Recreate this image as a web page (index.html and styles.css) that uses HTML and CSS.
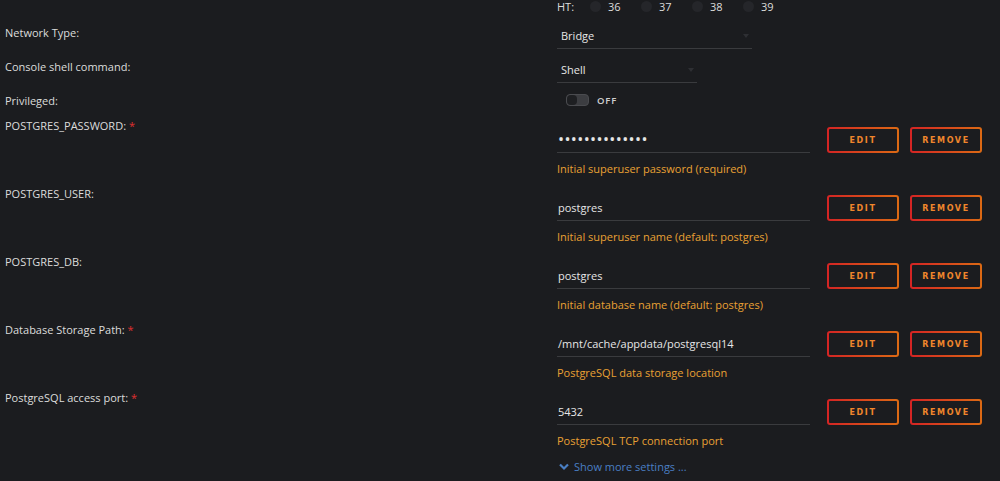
FILE: index.html
```html
<!DOCTYPE html>
<html lang="en">

<head>
    <meta charset="UTF-8">
    <title>Update Container</title>
    <link rel="stylesheet" href="styles.css">
</head>

<body>
    <div class="settings">
        <div class="row row-ht">
            <div class="label"></div>
            <div class="field">
                <span class="ht-title">HT:</span>
                <span class="cpu"><i class="dot"></i>36</span>
                <span class="cpu"><i class="dot"></i>37</span>
                <span class="cpu"><i class="dot"></i>38</span>
                <span class="cpu"><i class="dot"></i>39</span>
            </div>
        </div>

        <div class="row row-select">
            <div class="label">Network Type:</div>
            <div class="field">
                <div class="select select-wide">Bridge<i class="caret"></i></div>
            </div>
        </div>

        <div class="row row-select">
            <div class="label">Console shell command:</div>
            <div class="field">
                <div class="select select-narrow">Shell<i class="caret"></i></div>
            </div>
        </div>

        <div class="row row-toggle">
            <div class="label">Privileged:</div>
            <div class="field">
                <span class="switch"><i class="knob"></i></span>
                <span class="switch-text">OFF</span>
            </div>
        </div>

        <div class="row row-env">
            <div class="label">POSTGRES_PASSWORD: <span class="req">*</span></div>
            <div class="field">
                <div class="line">
                    <div class="value password">••••••••••••••</div>
                    <button class="btn">EDIT</button>
                    <button class="btn">REMOVE</button>
                </div>
                <div class="help">Initial superuser password (required)</div>
            </div>
        </div>

        <div class="row row-env">
            <div class="label">POSTGRES_USER:</div>
            <div class="field">
                <div class="line">
                    <div class="value">postgres</div>
                    <button class="btn">EDIT</button>
                    <button class="btn">REMOVE</button>
                </div>
                <div class="help">Initial superuser name (default: postgres)</div>
            </div>
        </div>

        <div class="row row-env">
            <div class="label">POSTGRES_DB:</div>
            <div class="field">
                <div class="line">
                    <div class="value">postgres</div>
                    <button class="btn">EDIT</button>
                    <button class="btn">REMOVE</button>
                </div>
                <div class="help">Initial database name (default: postgres)</div>
            </div>
        </div>

        <div class="row row-env">
            <div class="label">Database Storage Path: <span class="req">*</span></div>
            <div class="field">
                <div class="line">
                    <div class="value">/mnt/cache/appdata/postgresql14</div>
                    <button class="btn">EDIT</button>
                    <button class="btn">REMOVE</button>
                </div>
                <div class="help">PostgreSQL data storage location</div>
            </div>
        </div>

        <div class="row row-env">
            <div class="label">PostgreSQL access port: <span class="req">*</span></div>
            <div class="field">
                <div class="line">
                    <div class="value">5432</div>
                    <button class="btn">EDIT</button>
                    <button class="btn">REMOVE</button>
                </div>
                <div class="help">PostgreSQL TCP connection port</div>
                <div class="more">
                    <svg width="10" height="8" viewBox="0 0 10 8">
                        <path d="M1 1.5 L5 5.5 L9 1.5" fill="none" stroke="#4a7fc4" stroke-width="2.2"/>
                    </svg>
                    Show more settings ...
                </div>
            </div>
        </div>
    </div>
</body>

</html>
```

FILE: styles.css
```css
/* dark template editor */
body {
    margin: 0;
    background: #1b1c1f;
    color: #dcdcdc;
    font-family: "Open Sans", "Noto Sans", sans-serif;
    font-size: 11px;
    overflow: hidden;
}

.settings {
    padding-left: 5px;
}

.row {
    display: grid;
    grid-template-columns: 552px 1fr;
}

.label {
    line-height: 18px;
}

.req {
    color: #e03030;
}

/* cpu pinning line */
.row-ht {
    height: 27px;
    margin-top: -3px;
}

.row-ht .field {
    display: flex;
    align-items: center;
    height: 18px;
}

.ht-title {
    width: 33px;
}

.cpu {
    display: flex;
    align-items: center;
    width: 51px;
}

.dot {
    width: 11px;
    height: 11px;
    border-radius: 50%;
    background: #25262a;
    margin-right: 7px;
}

/* selects */
.row-select {
    height: 34px;
}

.select {
    position: relative;
    height: 24px;
    line-height: 24px;
    padding-left: 4px;
    border-bottom: 1px solid #3a3b3e;
    color: #e6e6e6;
}

.select-wide {
    width: 191px;
}

.select-narrow {
    width: 136px;
}

.caret {
    position: absolute;
    right: 3px;
    top: 10px;
    border-left: 3px solid transparent;
    border-right: 3px solid transparent;
    border-top: 4px solid #2e2f33;
}

/* switch */
.row-toggle {
    height: 27px;
}

.row-toggle .field {
    display: flex;
    align-items: center;
    height: 16px;
}

.switch {
    display: inline-block;
    width: 21px;
    height: 10px;
    margin-left: 9px;
    border: 1px solid #4a4b4f;
    border-radius: 4px;
    background: #3c3d41;
}

.knob {
    display: block;
    width: 10px;
    height: 10px;
    border-radius: 4px;
    background: #1e1f22;
}

.switch-text {
    margin-left: 8px;
    font-size: 9.5px;
    font-weight: 600;
    letter-spacing: 0.8px;
    color: #d0d0d0;
}

/* variables with edit / remove */
.row-env {
    padding-bottom: 11px;
}

.row-env .label {
    line-height: 14px;
}

.line {
    display: flex;
    align-items: center;
    margin-top: 8px;
}

.value {
    width: 252px;
    height: 25px;
    line-height: 25px;
    padding-left: 1px;
    border-bottom: 1px solid #3a3b3e;
    color: #e6e6e6;
}

.password {
    font-size: 16px;
    letter-spacing: 0.4px;
}

.btn {
    width: 72px;
    height: 26px;
    margin-left: 17px;
    padding: 0;
    border: 2px solid transparent;
    border-radius: 3px;
    background: linear-gradient(#1b1c1f, #1b1c1f) padding-box,
        linear-gradient(90deg, #d42424, #dc6a14) border-box;
    color: #f0862c;
    font-family: "DejaVu Sans", sans-serif;
    font-size: 8px;
    font-weight: bold;
    letter-spacing: 1.6px;
    cursor: pointer;
}

.btn + .btn {
    margin-left: 11px;
}

.help {
    margin-top: 9px;
    line-height: 14px;
    color: #e9a134;
}

.more {
    display: flex;
    align-items: center;
    gap: 5px;
    margin-top: 11px;
    padding-left: 2px;
    color: #4a7fc4;
}
```
